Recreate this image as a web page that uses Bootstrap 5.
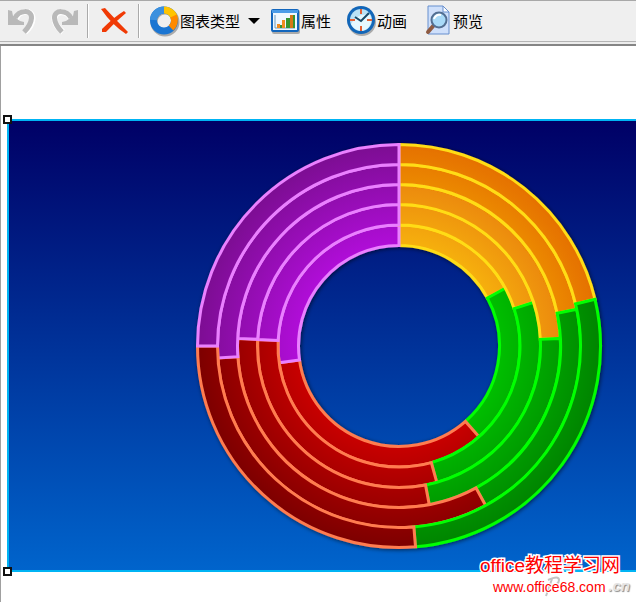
<!DOCTYPE html>
<html lang="zh-CN">
<head>
<meta charset="utf-8">
<meta name="viewport" content="width=device-width, initial-scale=1">
<title>图表编辑</title>
<link href="https://cdn.jsdelivr.net/npm/bootstrap@5.3.0/dist/css/bootstrap.min.css" rel="stylesheet">
<style>
body{font-family:"Liberation Sans","Noto Sans CJK SC",sans-serif;background:#fff;overflow:hidden}
.toolstrip{height:42px;background:#efefef;border-top:1px solid #a8a8a8;border-bottom:1px solid #b4b4b4;padding-left:4px}
.strip-edge{height:4px;background:#ececec;border-bottom:2px solid #858585}
.tool{font-size:15px;line-height:20px;color:#000;background:none;border:0;padding:0;white-space:nowrap}
.tool svg{flex:none;display:block}
.tool span{padding-top:2px}
.divider{width:2px;height:34px;background:#aaa;border-right:1px solid #fff}
.g-redo{margin-left:10px}
.g-line{margin-left:5px}
.g-del{margin-left:11px}
.g-end{margin-left:10px}
.g-type{margin-left:9px}
.g-prop{margin-left:10px}
.g-anim{margin-left:15px}
.g-view{margin-left:18px}
.workspace{border-left:1px solid #a0a0a0;padding:73px 0 0 6px}
.stage{height:453px;border:2px solid #00b4f4;border-right:0;background:linear-gradient(#000066,#0064cc);padding:17px 0 0 182px}
.stage svg.donut{display:block;flex:none}
.grip{position:absolute;width:9px;height:9px;border:2px solid #111;background:#fff;left:-6px}
.grip-top{top:-6px}
.grip-bottom{bottom:-6px}
.stamp{right:0;bottom:0;width:156px;height:48px;color:#f00}
.stamp-title{font-size:19px;line-height:24px;-webkit-text-stroke:3px #fff;paint-order:stroke fill;white-space:nowrap}
.stamp-link{font-size:14px;line-height:18px;color:#f00;margin-left:13px;-webkit-text-stroke:2px #fff;paint-order:stroke fill}
.stamp-back{right:6px;bottom:6px;font:italic bold 15px/20px "Liberation Sans",sans-serif;color:#e4e4e4;text-shadow:1px 1px 1px #888}
.stamp-flourish{left:60px;top:21px}
</style>
</head>
<body class="vh-100 d-flex flex-column position-relative">
<header>
<div class="toolstrip d-flex align-items-center" role="toolbar" aria-label="工具栏">
  <button class="tool" aria-label="撤销"><svg width="34" height="34" viewBox="0 0 34 34" fill="none"><path d="M12 15C15 6 29 5 28.500 15Q28 22 21 28" stroke="#fff" stroke-width="6"/><path d="M11 14C15 6 28 5 27.500 14Q27 21 20 28" stroke="#b9b9b9" stroke-width="5"/><path d="M4 6L8 7L9 12L16 17L20 18V21H4Z" fill="#b9b9b9"/></svg></button>
  <button class="tool g-redo" aria-label="重做"><svg width="34" height="34" viewBox="0 0 34 34" fill="none"><path d="M23 15C20 6 6 6 6.500 15Q7 22 15 28" stroke="#fff" stroke-width="6"/><path d="M23 14C19 6 6 5 6.500 14Q7 21 14 28" stroke="#b9b9b9" stroke-width="5"/><path d="M30 6L26 7L25 12L18 17L14 18V21H30Z" fill="#b9b9b9"/></svg></button>
  <span class="divider g-line"></span>
  <button class="tool g-del" aria-label="删除"><svg width="28" height="30" viewBox="0 0 28 30"><path d="M1 3L5 2Q15 13 28 26L26 28Q12 19 1 3ZM24 5L26 7Q16 15 6 26L2 26L2 23Q14 11 24 5Z" fill="#f03a05"/></svg></button>
  <span class="divider g-end"></span>
  <button class="tool g-type d-flex align-items-center"><svg width="31" height="32" viewBox="0 0 31 32" fill="none"><circle cx="16" cy="17" r="11" stroke="#aaa" stroke-width="7"/><circle cx="15" cy="15.500" r="10.500" stroke="#1a75d2" stroke-width="7"/><path d="M4.500 15A10.500 10.500 0 0 1 15 5" stroke="#3b90de" stroke-width="7"/><path d="M15 5A10.500 10.500 0 0 1 25.500 14" stroke="#ffc400" stroke-width="7"/><path d="M24.500 11A10.500 10.500 0 0 1 22 23" stroke="#ff8a00" stroke-width="7"/></svg><span>图表类型</span><svg class="ms-2" width="12" height="8" viewBox="0 0 12 8"><path d="M0 1H12L6 7Z"/></svg></button>
  <button class="tool g-prop d-flex align-items-center"><svg width="31" height="27" viewBox="0 0 31 27"><rect x="2" y="2" width="28" height="24" rx="2" fill="#aaa"/><rect x="1" y="1" width="28" height="23" rx="2" fill="#1266bd"/><rect x="2" y="2" width="26" height="3" fill="#4b9ce8"/><rect x="3" y="5" width="24" height="17" fill="#eef7ff"/><path d="M5 7V20H25" stroke="#6e9cbd" fill="none"/><path d="M7 16h3v4H7zM12 12h3v8h-3zM17 10h2v10h-2z" fill="#f08c20"/><path d="M10 17h2v3h-2zM16 10h4v10h-4z" fill="#35942f"/><path d="M20 7h3v13h-3z" fill="#d57717"/><path d="M23 7h2v13h-2z" fill="#35942f"/></svg><span>属性</span></button>
  <button class="tool g-anim d-flex align-items-center"><svg width="31" height="32" viewBox="0 0 31 32"><circle cx="16" cy="17" r="14" fill="#aaa"/><circle cx="15" cy="15" r="14" fill="#1266b8"/><circle cx="15" cy="15" r="11" fill="#b9e2f6"/><path d="M5 19Q12 7 24 10A11 11 0 0 1 15 26Q8 25 5 19" fill="#e6f8ff"/><path d="M15 4V9M15 21V26M4 15H9M21 15H26" stroke="#e66135" stroke-width="2"/><path d="M9 12L15 16L23 8" stroke="#184a68" stroke-width="2" fill="none"/></svg><span>动画</span></button>
  <button class="tool g-view d-flex align-items-center"><svg width="28" height="32" viewBox="0 0 28 32"><path d="M3 1H18L24 7V29H3Z" fill="#cfe0fb" stroke="#678fce"/><path d="M18 1V7H24Z" fill="#fff" stroke="#678fce"/><path d="M9 20L3 27" stroke="#8e5b42" stroke-width="4" stroke-linecap="round"/><circle cx="14" cy="15" r="7.500" fill="#a9daf8" stroke="#536f92" stroke-width="2"/><path d="M9 14Q11 9 16 10" stroke="#fff" stroke-width="2" fill="none"/></svg><span>预览</span></button>
</div>
<div class="strip-edge"></div>
</header>
<main class="workspace flex-grow-1">
  <div class="stage position-relative d-flex">
    <span class="grip grip-top"></span><span class="grip grip-bottom"></span>
    <svg class="donut" width="416" height="420" viewBox="0 0 416 420" role="img" aria-label="多层圆环图">
      <defs id="fills"></defs>
      <g id="rings" stroke-width="3" stroke-linejoin="miter"></g>
    </svg>
  </div>
</main>
<div class="stamp position-absolute">
  <svg class="stamp-flourish position-absolute" width="22" height="27" viewBox="0 0 22 27" fill="none" aria-hidden="true"><path d="M8 5Q19 0 19 5Q19 10 10 11M12 4L6 21" stroke="#c4c4c4" stroke-width="2"/></svg>
  <div class="stamp-back position-absolute">.cn</div>
  <div class="position-relative"><div class="stamp-title">office教程学习网</div><a class="stamp-link d-block text-decoration-none" href="#">www.office68.com</a></div>
</div>
<script src="https://cdn.jsdelivr.net/npm/bootstrap@5.3.0/dist/js/bootstrap.bundle.min.js"></script>
<script>
const cx = 208, cy = 208;
const radii = [100.5, 121, 141.5, 161.5, 181.5, 201.5];
// Boundary angles of each ring, clockwise from the top, innermost ring first
const rings = [[61.5,138.6,262],[72,164.5,272.6],[87.3,169.2,272.7],[78.3,151.5,266.2],[76.6,175.3,270]];
const series = [
  {line:'#ffdc14', inner:'#f6b010', outer:'#e57000'},
  {line:'#00ff00', inner:'#00be00', outer:'#008400'},
  {line:'#ff7b50', inner:'#c80000', outer:'#7c0000'},
  {line:'#ea80ff', inner:'#b010d8', outer:'#7c1092'}
];
const pt = (r, a) => { const t = a * Math.PI / 180; return (cx + r * Math.sin(t)) + ' ' + (cy - r * Math.cos(t)); };
document.getElementById('fills').innerHTML = '<filter id="shade"><feDropShadow dx="1" dy="1" stdDeviation="2" flood-color="#000" flood-opacity=".6"/></filter>' + series.map((s, i) =>
  `<radialGradient id="f${i}" gradientUnits="userSpaceOnUse" cx="${cx}" cy="${cy}" r="202"><stop offset=".5" stop-color="${s.inner}"/><stop offset="1" stop-color="${s.outer}"/></radialGradient>`).join('');
const g = document.getElementById('rings');
g.setAttribute('filter', 'url(#shade)');
g.innerHTML = rings.map((cuts, k) => {
  const a = [0, ...cuts, 360], r = radii[k], R = radii[k + 1];
  return series.map((s, i) => {
    const big = a[i + 1] - a[i] > 180 ? 1 : 0;
    return `<path fill="url(#f${i})" stroke="${s.line}" d="M${pt(R, a[i])}A${R} ${R} 0 ${big} 1 ${pt(R, a[i + 1])}L${pt(r, a[i + 1])}A${r} ${r} 0 ${big} 0 ${pt(r, a[i])}Z"/>`;
  }).join('');
}).join('');
</script>
</body>
</html>
